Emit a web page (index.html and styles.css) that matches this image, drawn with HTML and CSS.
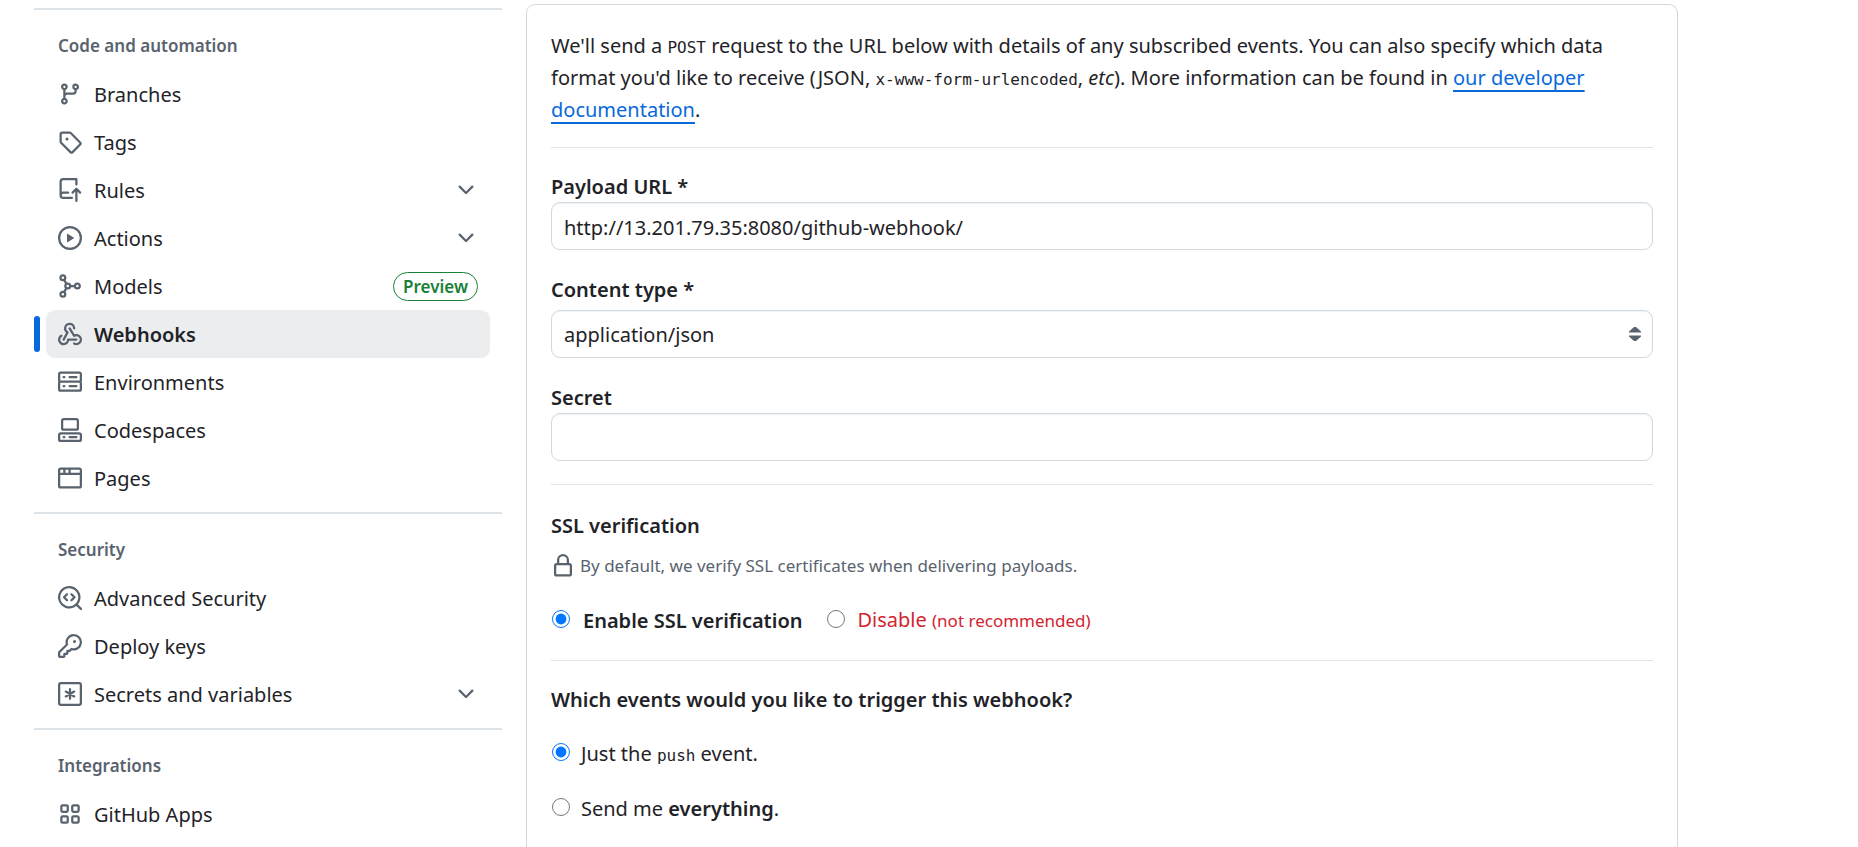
FILE: index.html
```html
<!DOCTYPE html>
<html lang="en">
<head>
<meta charset="utf-8">
<title>Webhooks · Settings</title>
<link rel="stylesheet" href="styles.css">
</head>
<body>
<div class="layout">
  <nav class="sidebar" aria-label="Settings">
    <section class="group">
      <h2 class="group-title">Code and automation</h2>
      <ul class="nav-list">
        <li><a class="nav-item" href="#"><svg class="icon" viewBox="0 0 16 16"><path d="M9.5 3.25a2.25 2.25 0 1 1 3 2.122V6A2.5 2.5 0 0 1 10 8.5H6a1 1 0 0 0-1 1v1.128a2.251 2.251 0 1 1-1.5 0V5.372a2.25 2.25 0 1 1 1.5 0v1.836A2.493 2.493 0 0 1 6 7h4a1 1 0 0 0 1-1v-.628A2.25 2.25 0 0 1 9.5 3.25Zm-6 0a.75.75 0 1 0 1.5 0 .75.75 0 0 0-1.5 0Zm8.25-.75a.75.75 0 1 0 0 1.5.75.75 0 0 0 0-1.5ZM4.25 12a.75.75 0 1 0 0 1.5.75.75 0 0 0 0-1.5Z"/></svg><span class="nav-text">Branches</span></a></li>
        <li><a class="nav-item" href="#"><svg class="icon" viewBox="0 0 16 16"><path d="M1 7.775V2.75C1 1.784 1.784 1 2.75 1h5.025c.464 0 .91.184 1.238.513l6.25 6.25a1.75 1.75 0 0 1 0 2.474l-5.026 5.026a1.75 1.75 0 0 1-2.474 0l-6.25-6.25A1.752 1.752 0 0 1 1 7.775Zm1.5 0c0 .066.026.13.073.177l6.25 6.25a.25.25 0 0 0 .354 0l5.025-5.025a.25.25 0 0 0 0-.354l-6.25-6.25a.25.25 0 0 0-.177-.073H2.75a.25.25 0 0 0-.25.25ZM6 5a1 1 0 1 1 0 2 1 1 0 0 1 0-2Z"/></svg><span class="nav-text">Tags</span></a></li>
        <li><button class="nav-item" type="button" aria-expanded="false"><svg class="icon" viewBox="0 0 16 16"><path d="M1 2.5A2.5 2.5 0 0 1 3.5 0h8.75a.75.75 0 0 1 .75.75v3.5a.75.75 0 0 1-1.5 0V1.5h-8a1 1 0 0 0-1 1v6.708A2.493 2.493 0 0 1 3.5 9h3.25a.75.75 0 0 1 0 1.5H3.5a1 1 0 0 0 0 2h5.75a.75.75 0 0 1 0 1.5H3.5A2.5 2.5 0 0 1 1 11.5Zm13.23 7.79h-.001l-1.224-1.224v6.184a.75.75 0 0 1-1.5 0V9.066L10.28 10.29a.75.75 0 0 1-1.06-1.061l2.505-2.504a.75.75 0 0 1 1.06 0L15.29 9.23a.751.751 0 0 1-.018 1.042.751.751 0 0 1-1.042.018Z"/></svg><span class="nav-text">Rules</span><svg class="icon chevron" viewBox="0 0 16 16"><path d="M12.78 5.22a.749.749 0 0 1 0 1.06l-4.25 4.25a.749.749 0 0 1-1.06 0L3.22 6.28a.749.749 0 1 1 1.06-1.06L8 8.939l3.72-3.719a.749.749 0 0 1 1.06 0Z"/></svg></button></li>
        <li><button class="nav-item" type="button" aria-expanded="false"><svg class="icon" viewBox="0 0 16 16"><path d="M8 0a8 8 0 1 1 0 16A8 8 0 0 1 8 0ZM1.5 8a6.5 6.5 0 1 0 13 0 6.5 6.5 0 0 0-13 0Zm4.879-2.773 4.264 2.559a.25.25 0 0 1 0 .428l-4.264 2.559A.25.25 0 0 1 6 10.559V5.442a.25.25 0 0 1 .379-.215Z"/></svg><span class="nav-text">Actions</span><svg class="icon chevron" viewBox="0 0 16 16"><path d="M12.78 5.22a.749.749 0 0 1 0 1.06l-4.25 4.25a.749.749 0 0 1-1.06 0L3.22 6.28a.749.749 0 1 1 1.06-1.06L8 8.939l3.72-3.719a.749.749 0 0 1 1.06 0Z"/></svg></button></li>
        <li><a class="nav-item" href="#"><svg class="icon line-icon" viewBox="0 0 16 16"><circle cx="3.25" cy="2.5" r="1.6"/><circle cx="3.25" cy="13.5" r="1.6"/><circle cx="6.5" cy="8" r="1.6"/><circle cx="12.9" cy="8" r="1.6"/><path d="M8.1 8h3.2M4.1 4l1.5 2.6M4.1 12l1.5-2.6"/></svg><span class="nav-text">Models</span><span class="badge">Preview</span></a></li>
        <li><a class="nav-item current" href="#" aria-current="page"><svg class="icon" viewBox="0 0 16 16"><path d="M5.5 4.25a2.25 2.25 0 0 1 4.5 0 .75.75 0 0 0 1.5 0 3.75 3.75 0 1 0-6.14 2.889l-2.272 4.258a.75.75 0 0 0 1.324.706L7 7.25a.75.75 0 0 0-.309-1.015A2.25 2.25 0 0 1 5.5 4.25Z"/><path d="M7.364 3.607a.75.75 0 0 1 1.03.257l2.608 4.349a3.75 3.75 0 1 1-.628 6.785.75.75 0 0 1 .752-1.299 2.25 2.25 0 1 0-.033-3.88.75.75 0 0 1-1.03-.256L7.107 4.636a.75.75 0 0 1 .257-1.03Z"/><path d="M2.9 8.776A.75.75 0 0 1 2.625 9.8 2.25 2.25 0 1 0 6 11.75a.75.75 0 0 1 .75-.751h5.5a.75.75 0 0 1 0 1.5H7.425a3.751 3.751 0 1 1-5.55-3.998.75.75 0 0 1 1.024.274Z"/></svg><span class="nav-text">Webhooks</span></a></li>
        <li><a class="nav-item" href="#"><svg class="icon" viewBox="0 0 16 16"><path d="M1.75 1h12.5c.966 0 1.75.784 1.75 1.75v4c0 .372-.116.717-.314 1 .198.283.314.628.314 1v4a1.75 1.75 0 0 1-1.75 1.75H1.75A1.75 1.75 0 0 1 0 12.75v-4c0-.358.109-.707.314-1a1.739 1.739 0 0 1-.314-1v-4C0 1.784.784 1 1.75 1ZM1.5 2.75v4c0 .138.112.25.25.25h12.5a.25.25 0 0 0 .25-.25v-4a.25.25 0 0 0-.25-.25H1.75a.25.25 0 0 0-.25.25Zm.25 5.75a.25.25 0 0 0-.25.25v4c0 .138.112.25.25.25h12.5a.25.25 0 0 0 .25-.25v-4a.25.25 0 0 0-.25-.25ZM7 4.75A.75.75 0 0 1 7.75 4h4.5a.75.75 0 0 1 0 1.5h-4.5A.75.75 0 0 1 7 4.75ZM7.75 10h4.5a.75.75 0 0 1 0 1.5h-4.5a.75.75 0 0 1 0-1.5ZM3 4.75A.75.75 0 0 1 3.75 4h.5a.75.75 0 0 1 0 1.5h-.5A.75.75 0 0 1 3 4.75ZM3.75 10h.5a.75.75 0 0 1 0 1.5h-.5a.75.75 0 0 1 0-1.5Z"/></svg><span class="nav-text">Environments</span></a></li>
        <li><a class="nav-item" href="#"><svg class="icon" viewBox="0 0 16 16"><path d="M0 11.25c0-.966.784-1.75 1.75-1.75h12.5c.966 0 1.75.784 1.75 1.75v3A1.75 1.75 0 0 1 14.25 16H1.75A1.75 1.75 0 0 1 0 14.25Zm2-9.5C2 .784 2.784 0 3.75 0h8.5C13.216 0 14 .784 14 1.75v5a1.75 1.75 0 0 1-1.75 1.75h-8.5A1.75 1.75 0 0 1 2 6.75Zm1.75-.25a.25.25 0 0 0-.25.25v5c0 .138.112.25.25.25h8.5a.25.25 0 0 0 .25-.25v-5a.25.25 0 0 0-.25-.25Zm-2 9.5a.25.25 0 0 0-.25.25v3c0 .138.112.25.25.25h12.5a.25.25 0 0 0 .25-.25v-3a.25.25 0 0 0-.25-.25Z"/><path d="M7 12.75a.75.75 0 0 1 .75-.75h4.5a.75.75 0 0 1 0 1.5h-4.5a.75.75 0 0 1-.75-.75Zm-4 0a.75.75 0 0 1 .75-.75h.5a.75.75 0 0 1 0 1.5h-.5a.75.75 0 0 1-.75-.75Z"/></svg><span class="nav-text">Codespaces</span></a></li>
        <li><a class="nav-item" href="#"><svg class="icon" viewBox="0 0 16 16"><path d="M0 2.75C0 1.784.784 1 1.75 1h12.5c.966 0 1.75.784 1.75 1.75v10.5A1.75 1.75 0 0 1 14.25 15H1.75A1.75 1.75 0 0 1 0 13.25ZM14.5 6h-13v7.25c0 .138.112.25.25.25h12.5a.25.25 0 0 0 .25-.25Zm-6-3.5v2h6V2.75a.25.25 0 0 0-.25-.25ZM5 2.5v2h2v-2Zm-3.25 0a.25.25 0 0 0-.25.25V4.5h2v-2Z"/></svg><span class="nav-text">Pages</span></a></li>
      </ul>
    </section>
    <section class="group">
      <h2 class="group-title">Security</h2>
      <ul class="nav-list">
        <li><a class="nav-item" href="#"><svg class="icon" viewBox="0 0 16 16"><path d="M8.47 4.97a.75.75 0 0 0 0 1.06L9.94 7.5 8.47 8.97a.75.75 0 1 0 1.06 1.06l2-2a.75.75 0 0 0 0-1.06l-2-2a.75.75 0 0 0-1.06 0ZM6.53 6.03a.75.75 0 0 0-1.06-1.06l-2 2a.75.75 0 0 0 0 1.06l2 2a.75.75 0 1 0 1.06-1.06L5.06 7.5l1.47-1.47Z"/><path d="M12.246 13.307a7.501 7.501 0 1 1 1.06-1.06l2.474 2.473a.749.749 0 0 1-.326 1.275.749.749 0 0 1-.734-.215ZM1.5 7.5a6.002 6.002 0 0 0 3.608 5.504 6.002 6.002 0 0 0 6.486-1.117.748.748 0 0 1 .292-.293A6 6 0 1 0 1.5 7.5Z"/></svg><span class="nav-text">Advanced Security</span></a></li>
        <li><a class="nav-item" href="#"><svg class="icon" viewBox="0 0 16 16"><path d="M10.5 0a5.499 5.499 0 1 1-1.288 10.848l-.932.932a.749.749 0 0 1-.53.22H7v.75a.749.749 0 0 1-.22.53l-.5.5a.749.749 0 0 1-.53.22H5v.75a.749.749 0 0 1-.22.53l-.5.5a.749.749 0 0 1-.53.22h-2A1.75 1.75 0 0 1 0 14.25v-2c0-.199.079-.389.22-.53l4.932-4.932A5.5 5.5 0 0 1 10.5 0Zm-4 5.5c-.001.431.069.86.205 1.269a.75.75 0 0 1-.181.768L1.5 12.56v1.69c0 .138.112.25.25.25h1.69l.06-.06v-1.19a.75.75 0 0 1 .75-.75h1.19l.06-.06v-1.19a.75.75 0 0 1 .75-.75h1.19l1.023-1.025a.75.75 0 0 1 .768-.18A4 4 0 1 0 6.5 5.5ZM11 6a1 1 0 1 1 0-2 1 1 0 0 1 0 2Z"/></svg><span class="nav-text">Deploy keys</span></a></li>
        <li><button class="nav-item" type="button" aria-expanded="false"><svg class="icon line-icon" viewBox="0 0 16 16"><rect x=".75" y=".75" width="14.5" height="14.5" rx="1.2"/><path d="M8 4.8v6.4M5.2 6.4l5.6 3.2M5.2 9.6l5.6-3.2"/></svg><span class="nav-text">Secrets and variables</span><svg class="icon chevron" viewBox="0 0 16 16"><path d="M12.78 5.22a.749.749 0 0 1 0 1.06l-4.25 4.25a.749.749 0 0 1-1.06 0L3.22 6.28a.749.749 0 1 1 1.06-1.06L8 8.939l3.72-3.719a.749.749 0 0 1 1.06 0Z"/></svg></button></li>
      </ul>
    </section>
    <section class="group">
      <h2 class="group-title">Integrations</h2>
      <ul class="nav-list">
        <li><a class="nav-item" href="#"><svg class="icon line-icon" viewBox="0 0 16 16"><rect x="2.25" y="2.25" width="4.25" height="4.25" rx=".8"/><rect x="9.5" y="2.25" width="4.25" height="4.25" rx=".8"/><rect x="2.25" y="9.5" width="4.25" height="4.25" rx=".8"/><rect x="9.5" y="9.5" width="4.25" height="4.25" rx=".8"/></svg><span class="nav-text">GitHub Apps</span></a></li>
      </ul>
    </section>
  </nav>

  <main class="panel">
    <form class="form">
      <p class="intro">We'll send a <code>POST</code> request to the URL below with details of any subscribed events. You can also specify which data format you'd like to receive (JSON, <code>x-www-form-urlencoded</code>, <em>etc</em>). More information can be found in <a class="doc-link" href="#">our developer documentation</a>.</p>

      <div class="section fields">
        <div class="field">
          <label class="label" for="url">Payload URL *</label>
          <input class="control" id="url" type="text" value="http://13.201.79.35:8080/github-webhook/">
        </div>
        <div class="field spaced">
          <label class="label" for="type">Content type *</label>
          <div class="select-wrap">
            <select class="control" id="type"><option>application/json</option><option>application/x-www-form-urlencoded</option></select>
            <svg class="select-arrows" viewBox="0 0 12 16"><path d="M5 1h2l5 4.5v1H0v-1zM5 15h2l5-4.5v-1H0v1z"/></svg>
          </div>
        </div>
        <div class="field">
          <label class="label" for="secret">Secret</label>
          <input class="control" id="secret" type="text">
        </div>
      </div>

      <div class="section ssl">
        <h3 class="label">SSL verification</h3>
        <p class="note"><svg class="icon" viewBox="0 0 16 16"><path d="M4 4a4 4 0 0 1 8 0v2h.25c.966 0 1.75.784 1.75 1.75v5.5A1.75 1.75 0 0 1 12.25 15h-8.5A1.75 1.75 0 0 1 2 13.25v-5.5C2 6.784 2.784 6 3.75 6H4Zm8.25 3.5h-8.5a.25.25 0 0 0-.25.25v5.5c0 .138.112.25.25.25h8.5a.25.25 0 0 0 .25-.25v-5.5a.25.25 0 0 0-.25-.25ZM10.5 6V4a2.5 2.5 0 1 0-5 0v2Z"/></svg><span>By default, we verify SSL certificates when delivering payloads.</span></p>
        <div class="ssl-options">
          <label class="choice"><input class="radio" type="radio" name="ssl" checked><strong>Enable SSL verification</strong></label>
          <label class="choice danger"><input class="radio" type="radio" name="ssl"><span>Disable <small>(not recommended)</small></span></label>
        </div>
      </div>

      <div class="section events">
        <h3 class="label">Which events would you like to trigger this webhook?</h3>
        <label class="choice"><input class="radio" type="radio" name="events" checked><span>Just the <code>push</code> event.</span></label>
        <label class="choice"><input class="radio" type="radio" name="events"><span>Send me <strong>everything</strong>.</span></label>
      </div>
    </form>
  </main>
</div>
</body>
</html>
```
FILE: styles.css
```css
* {
  box-sizing: border-box;
}

body {
  margin: 0;
  background: #fff;
  color: #1f2328;
  font: 20px/32px "Noto Sans", "Open Sans", sans-serif;
}

h2, h3, p, ul {
  margin: 0;
  padding: 0;
}

ul {
  list-style: none;
}

strong {
  font-weight: 600;
}

code {
  font: 16px/24px "DejaVu Sans Mono", monospace;
}

.layout {
  display: grid;
  grid-template-columns: 468px minmax(0, 1fr);
  gap: 24px;
  height: 100vh;
  padding: 0 180px 0 34px;
  overflow: hidden;
}

.sidebar {
  padding-top: 8px;
}

.group {
  border-top: 2px solid #dfe4e8;
  padding: 24px 12px 10px;
}

.group-title {
  margin: 0 12px 12px;
  color: #59636e;
  font-size: 17px;
  font-weight: 600;
  line-height: 24px;
}

.nav-item {
  position: relative;
  display: flex;
  align-items: center;
  gap: 12px;
  width: 100%;
  height: 48px;
  padding: 0 12px;
  border: 0;
  border-radius: 9px;
  background: none;
  color: inherit;
  font: inherit;
  text-align: left;
  text-decoration: none;
}

.nav-text {
  padding-top: 2px;
}

.nav-item.current {
  background: #ecedef;
  font-weight: 600;
}

.nav-item.current::before {
  content: "";
  position: absolute;
  left: -12px;
  top: 6px;
  bottom: 6px;
  width: 6px;
  border-radius: 4px;
  background: #0969da;
}

.icon {
  flex: none;
  width: 24px;
  height: 24px;
  fill: #59636e;
}

.line-icon {
  fill: none;
  stroke: #59636e;
  stroke-width: 1.5;
  stroke-linecap: round;
}

.chevron {
  margin-left: auto;
}

.badge {
  margin-left: auto;
  padding: 0 9px;
  border: 1px solid #1a7f37;
  border-radius: 15px;
  color: #1a7f37;
  font-size: 17px;
  font-weight: 600;
  line-height: 27px;
}

.panel {
  margin-top: 4px;
  padding: 25px 24px;
  border: 1px solid #d1d9e0;
  border-bottom: 0;
  border-radius: 9px 9px 0 0;
}

.doc-link {
  color: #0969da;
  text-decoration: underline;
  text-decoration-skip-ink: none;
  text-decoration-thickness: 2px;
  text-underline-offset: 5px;
}

.section {
  margin-top: 21px;
  border-top: 1px solid #dfe4e8;
}

.fields {
  padding: 24px 0 2px;
}

.field + .field {
  margin-top: 25px;
}

.field.spaced .label {
  margin-bottom: 5px;
}

.label {
  display: block;
  font-size: 20px;
  font-weight: 600;
  line-height: 30px;
}

.control {
  display: block;
  width: 100%;
  height: 48px;
  padding: 2px 12px 0;
  border: 1px solid #d1d9e0;
  border-radius: 9px;
  background: #fff;
  box-shadow: inset 0 1px 1px #f0f2f4;
  color: inherit;
  font: inherit;
  appearance: none;
}

.select-wrap {
  position: relative;
}

.select-arrows {
  position: absolute;
  top: 16px;
  right: 12px;
  width: 12px;
  height: 16px;
  fill: #59636e;
}

.ssl {
  padding: 26px 0 2px;
}

.note {
  display: flex;
  align-items: center;
  gap: 5px;
  margin-top: 9px;
  color: #59636e;
  font-size: 17px;
}

.ssl-options {
  display: flex;
  gap: 23px;
  margin-top: 22px;
}

.choice {
  display: flex;
  align-items: center;
  gap: 11px;
}

.ssl-options .choice {
  gap: 13px;
}

.radio {
  flex: none;
  width: 18px;
  height: 18px;
  margin: 0 0 4px 1px;
}

.danger {
  color: #d1242f;
}

.danger small {
  font-size: 17px;
}

.events {
  padding-top: 24px;
}

.events .choice {
  width: fit-content;
  margin-top: 23px;
}
```
